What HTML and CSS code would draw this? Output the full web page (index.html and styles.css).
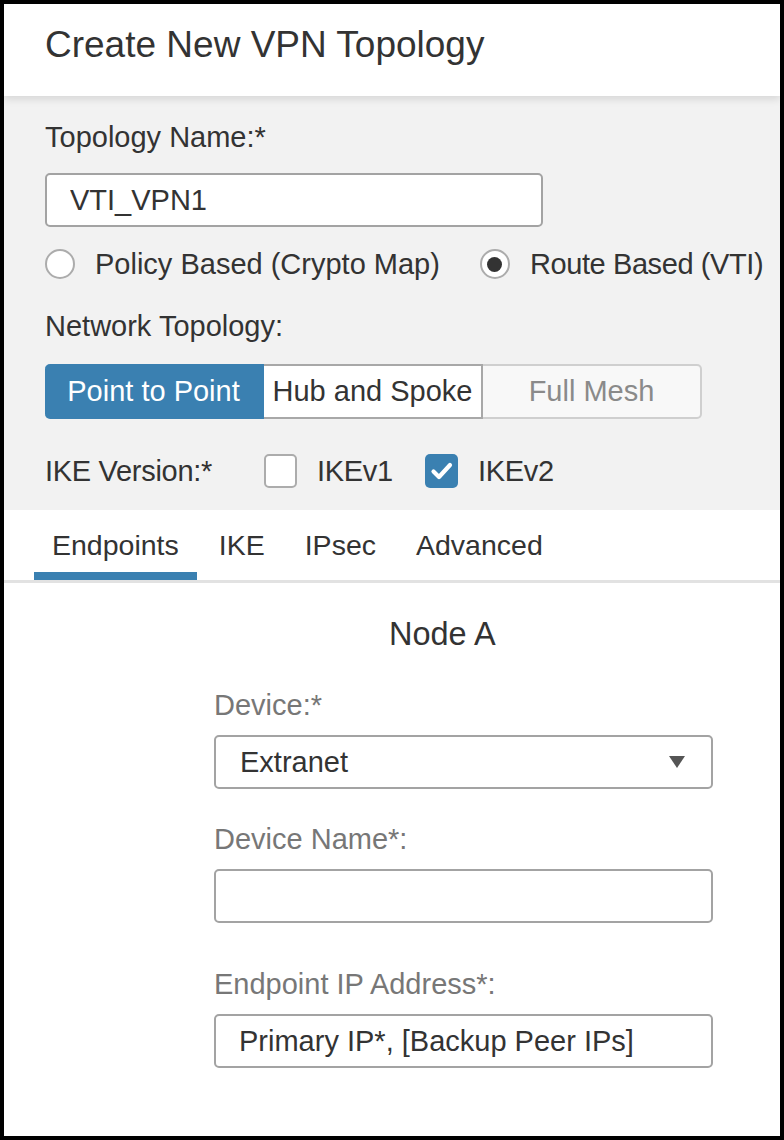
FILE: index.html
```html
<!DOCTYPE html>
<html lang="en">

<head>
    <meta charset="UTF-8">
    <meta name="viewport" content="width=device-width, initial-scale=1.0">
    <title>Create New VPN Topology</title>
    <link rel="stylesheet" href="styles.css">
</head>

<body>
    <div class="dialog">
        <div class="header">
            <h1>Create New VPN Topology</h1>
        </div>

        <div class="general">
            <label class="field-label" for="topologyName">Topology Name:*</label>
            <input class="text-input name-input" type="text" id="topologyName" value="VTI_VPN1">

            <div class="radio-row">
                <label class="radio">
                    <span class="radio-circle"></span>
                    Policy Based (Crypto Map)
                </label>
                <label class="radio route">
                    <span class="radio-circle checked"></span>
                    Route Based (VTI)
                </label>
            </div>

            <div class="field-label topology-label">Network Topology:</div>
            <div class="segmented">
                <button class="segment active">Point to Point</button>
                <button class="segment">Hub and Spoke</button>
                <button class="segment disabled">Full Mesh</button>
            </div>

            <div class="ike-row">
                <span class="ike-label">IKE Version:*</span>
                <label class="check">
                    <span class="check-box"></span>
                    IKEv1
                </label>
                <label class="check">
                    <span class="check-box checked">
                        <svg width="33" height="33" viewBox="0 0 33 33">
                            <path d="M8.5 17.5 L14 23 L25 11" fill="none" stroke="#fff" stroke-width="4.2"
                                stroke-linecap="round" stroke-linejoin="round" />
                        </svg>
                    </span>
                    IKEv2
                </label>
            </div>
        </div>

        <div class="tabs">
            <div class="tab active">Endpoints</div>
            <div class="tab">IKE</div>
            <div class="tab">IPsec</div>
            <div class="tab">Advanced</div>
        </div>

        <div class="endpoints">
            <h2 class="node-title">Node A</h2>

            <div class="node-form">
                <label class="node-label" for="device">Device:*</label>
                <div class="select-box" id="device">
                    <span>Extranet</span>
                    <span class="select-arrow"></span>
                </div>

                <label class="node-label name-label" for="deviceName">Device Name*:</label>
                <input class="text-input node-input" type="text" id="deviceName">

                <label class="node-label ip-label" for="endpointIp">Endpoint IP Address*:</label>
                <input class="text-input node-input" type="text" id="endpointIp"
                    placeholder="Primary IP*, [Backup Peer IPs]">
            </div>
        </div>
    </div>
</body>

</html>
```

FILE: styles.css
```css
* {
    box-sizing: border-box;
}

body {
    margin: 0;
    padding: 0;
    background-color: #ffffff;
    font-family: "Liberation Sans", Arial, Helvetica, sans-serif;
    color: #333333;
}

.dialog {
    width: 784px;
    height: 1140px;
    border: 4px solid #000000;
    background-color: #ffffff;
    overflow: hidden;
}

.header {
    position: relative;
    z-index: 1;
    height: 92px;
    padding: 22px 0 0 41px;
    background-color: #ffffff;
    box-shadow: 0 3px 8px rgba(0, 0, 0, 0.12);
}

h1 {
    margin: 0;
    font-size: 37px;
    line-height: 37px;
    font-weight: normal;
    color: #333333;
}

.general {
    padding: 24px 0 22px 41px;
    background-color: #f2f2f2;
}

.field-label {
    display: block;
    font-size: 29px;
    line-height: 34px;
    color: #333333;
}

.text-input {
    display: block;
    height: 54px;
    padding: 0 0 0 23px;
    border: 2px solid #a3a3a3;
    border-radius: 5px;
    background-color: #ffffff;
    font-family: inherit;
    font-size: 29px;
    color: #333333;
    outline: none;
}

.text-input::placeholder {
    color: #333333;
    opacity: 1;
}

.name-input {
    width: 498px;
    margin-top: 19px;
}

.radio-row {
    display: flex;
    align-items: center;
    gap: 40px;
    margin-top: 20px;
    height: 34px;
}

.radio {
    display: flex;
    align-items: center;
    gap: 20px;
    font-size: 29px;
    line-height: 34px;
}

.radio.route {
    letter-spacing: -0.4px;
}

.radio-circle {
    width: 30px;
    height: 30px;
    border: 2px solid #acacac;
    border-radius: 50%;
    background-color: #ffffff;
    display: flex;
    align-items: center;
    justify-content: center;
}

.radio-circle.checked::after {
    content: "";
    width: 15px;
    height: 15px;
    border-radius: 50%;
    background-color: #333333;
}

.topology-label {
    margin-top: 28px;
}

.segmented {
    display: flex;
    margin-top: 21px;
}

.segment {
    width: 219px;
    height: 55px;
    padding: 0;
    font-family: inherit;
    font-size: 29px;
    color: #333333;
    background-color: #ffffff;
    border: 2px solid #a8a8a8;
    border-left: none;
}

.segment.active {
    background-color: #3a80b1;
    border-color: #3a80b1;
    color: #ffffff;
    border-radius: 5px 0 0 5px;
}

.segment.disabled {
    background-color: #f8f8f8;
    border-color: #cfcfcf;
    color: #8a8a8a;
    border-radius: 0 5px 5px 0;
}

.ike-row {
    display: flex;
    align-items: center;
    margin-top: 35px;
    height: 34px;
    font-size: 29px;
    letter-spacing: -0.3px;
}

.ike-label {
    width: 219px;
}

.check {
    display: flex;
    align-items: center;
    gap: 20px;
    margin-right: 32px;
}

.check-box {
    width: 33px;
    height: 34px;
    border: 2px solid #acacac;
    border-radius: 5px;
    background-color: #ffffff;
}

.check-box.checked {
    border: none;
    background-color: #3a80b1;
}

.check-box svg {
    display: block;
}

.tabs {
    display: flex;
    gap: 4px;
    padding-left: 30px;
    border-bottom: 3px solid #e2e2e2;
}

.tab {
    padding: 18px 18px 10px;
    font-size: 28.5px;
    line-height: 34px;
    color: #333333;
    border-bottom: 8px solid transparent;
}

.tab.active {
    border-bottom-color: #3a80b1;
}

.endpoints {
    padding-top: 32px;
}

.node-title {
    margin: 0 0 0 385px;
    font-size: 32.5px;
    line-height: 38px;
    font-weight: normal;
    color: #333333;
}

.node-form {
    width: 499px;
    margin-left: 210px;
}

.node-label {
    display: block;
    margin-top: 35px;
    font-size: 29px;
    line-height: 34px;
    color: #777777;
}

.name-label {
    margin-top: 33px;
}

.ip-label {
    margin-top: 44px;
}

.select-box {
    display: flex;
    align-items: center;
    justify-content: space-between;
    height: 54px;
    margin-top: 13px;
    padding: 0 26px 0 24px;
    border: 2px solid #a3a3a3;
    border-radius: 5px;
    background-color: #ffffff;
    font-size: 29px;
    color: #333333;
}

.select-arrow {
    width: 0;
    height: 0;
    border-left: 8.5px solid transparent;
    border-right: 8.5px solid transparent;
    border-top: 12px solid #555555;
}

.node-input {
    width: 499px;
    margin-top: 13px;
}
```
